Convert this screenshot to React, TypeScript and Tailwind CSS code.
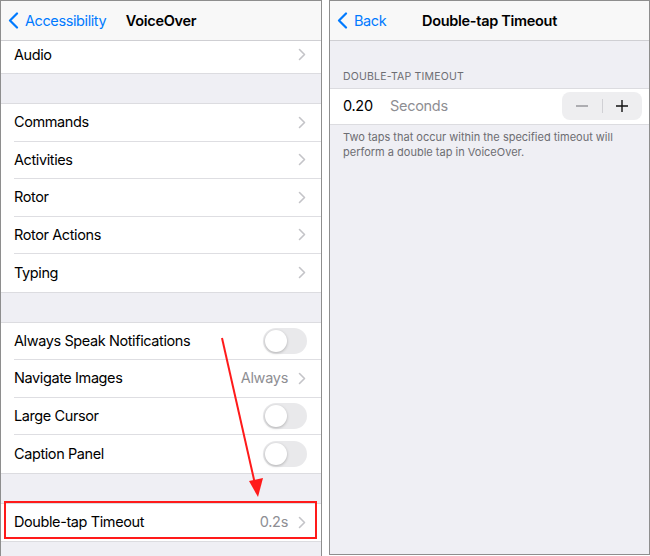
import React from "react";

const FONT = { fontFamily: "Inter, 'Liberation Sans', sans-serif" };

function Chevron() {
  return (
    <svg width="8" height="13" viewBox="0 0 8 13" className="shrink-0">
      <path d="M1.5 1.5 L6.5 6.5 L1.5 11.5" fill="none" stroke="#c4c4c8" strokeWidth="1.6" strokeLinecap="round" strokeLinejoin="round" />
    </svg>
  );
}

function BackChevron() {
  return (
    <svg width="11" height="17" viewBox="0 0 11 17" className="shrink-0">
      <path d="M9 1.5 L2 8.5 L9 15.5" fill="none" stroke="#007aff" strokeWidth="2.2" strokeLinecap="round" strokeLinejoin="round" />
    </svg>
  );
}

function Toggle() {
  return (
    <div className="w-[44px] h-[26px] rounded-full bg-[#e9e9eb] p-[2px] flex items-center">
      <div className="w-[22px] h-[22px] rounded-full bg-white shadow-[0_1px_3px_rgba(0,0,0,0.25)]" />
    </div>
  );
}

type RowProps = {
  label: string;
  value?: string;
  chevron?: boolean;
  toggle?: boolean;
  last?: boolean;
  h?: string;
  extra?: string;
};

function Row({ label, value, chevron, toggle, last, h = "h-[37.5px]", extra = "" }: RowProps) {
  return (
    <div className={`${h} pl-[13px] bg-white`}>
      <div className={`h-full flex items-center pr-[14px] ${extra} ${last ? "" : "border-b border-[#dedee2]"}`}>
        <span className="flex-1 text-[14.5px] tracking-[-0.4px] text-black">{label}</span>
        {value && <span className="text-[14.5px] tracking-[-0.3px] text-[#8e8e93] mr-[10px]">{value}</span>}
        {chevron && <div className="mr-[1px]"><Chevron /></div>}
        {toggle && <Toggle />}
      </div>
    </div>
  );
}

function Group({ children }: { children: React.ReactNode }) {
  return <div className="bg-white border-y border-[#dcdce0]">{children}</div>;
}

export default function App() {
  return (
    <div className="w-[650px] h-[556px] bg-white flex gap-[7px] relative overflow-hidden" style={FONT}>
      {/* Left panel */}
      <div className="w-[322px] h-[556px] border border-b-0 border-[#8e8e8e] bg-[#efeff4] flex flex-col overflow-hidden">
        <div className="h-[40px] shrink-0 bg-[#f8f8f8] border-b border-[#cfcfd3] flex items-center relative">
          <div className="flex items-center pl-[7px] gap-[6px] text-[#007aff] text-[14.5px] tracking-[-0.4px]">
            <BackChevron />
            <span>Accessibility</span>
          </div>
          <div className="absolute left-0 right-0 text-center text-[14.5px] tracking-[-0.3px] font-semibold text-black pointer-events-none">
            <span>VoiceOver</span>
          </div>
        </div>
        <div className="bg-white border-b border-[#dcdce0]">
          <Row label="Audio" chevron last h="h-[32px]" extra="pb-[5px]" />
        </div>
        <div className="h-[29px] shrink-0" />
        <Group>
          <Row label="Commands" chevron />
          <Row label="Activities" chevron />
          <Row label="Rotor" chevron />
          <Row label="Rotor Actions" chevron />
          <Row label="Typing" chevron last />
        </Group>
        <div className="h-[29px] shrink-0" />
        <Group>
          <Row label="Always Speak Notifications" toggle />
          <Row label="Navigate Images" value="Always" chevron />
          <Row label="Large Cursor" toggle />
          <Row label="Caption Panel" toggle last />
        </Group>
        <div className="h-[29px] shrink-0" />
        <Group>
          <Row label="Double-tap Timeout" value="0.2s" chevron last h="h-[37px]" />
        </Group>
      </div>

      {/* Right panel */}
      <div className="w-[321px] h-[555px] border border-[#8e8e8e] bg-[#efeff4] flex flex-col">
        <div className="h-[40px] shrink-0 bg-[#f8f8f8] border-b border-[#cfcfd3] flex items-center relative">
          <div className="flex items-center pl-[7px] gap-[6px] text-[#007aff] text-[14.5px] tracking-[-0.4px]">
            <BackChevron />
            <span>Back</span>
          </div>
          <div className="absolute left-0 right-0 text-center text-[14.5px] tracking-[-0.3px] font-semibold text-black pointer-events-none">
            <span>Double-tap Timeout</span>
          </div>
        </div>
        <div className="pt-[28px] pb-[3px] pl-[13px] text-[10.5px] text-[#6d6d72] tracking-[0.2px]">DOUBLE-TAP TIMEOUT</div>
        <div className="h-[37px] bg-white border-y border-[#dcdce0] flex items-center pl-[13px] pr-[7px]">
          <span className="text-[14.5px] tracking-[-0.3px] text-black w-[47px]">0.20</span>
          <span className="text-[14.5px] tracking-[-0.3px] text-[#8e8e93] flex-1">Seconds</span>
          <div className="w-[80px] h-[28px] rounded-[8px] bg-[#eeeef0] flex items-center">
            <div className="flex-1 flex items-center justify-center">
              <svg width="14" height="14" viewBox="0 0 14 14">
                <path d="M1 7 H13" stroke="#8a8a8e" strokeWidth="1.3" />
              </svg>
            </div>
            <div className="w-px h-[14px] bg-[#d0d0d4]" />
            <div className="flex-1 flex items-center justify-center">
              <svg width="14" height="14" viewBox="0 0 14 14">
                <path d="M1 7 H13 M7 1 V13" stroke="#111" strokeWidth="1.4" />
              </svg>
            </div>
          </div>
        </div>
        <div className="pt-[5px] pl-[13px] pr-[10px] text-[11px] leading-[15px] text-[#6d6d72]">
          Two taps that occur within the specified timeout will perform a double tap in VoiceOver.
        </div>
      </div>

      {/* Red highlight box */}
      <div className="absolute left-[4px] top-[501px] w-[313px] h-[38px] border-[2px] border-[#ff1a1a] pointer-events-none" />

      {/* Red arrow */}
      <svg className="absolute left-0 top-0 pointer-events-none" width="650" height="556" viewBox="0 0 650 556">
        <line x1="222" y1="338" x2="255" y2="484" stroke="#ff1a1a" strokeWidth="2" />
        <polygon points="258,497 249,481 263,478" fill="#ff1a1a" />
      </svg>
    </div>
  );
}
